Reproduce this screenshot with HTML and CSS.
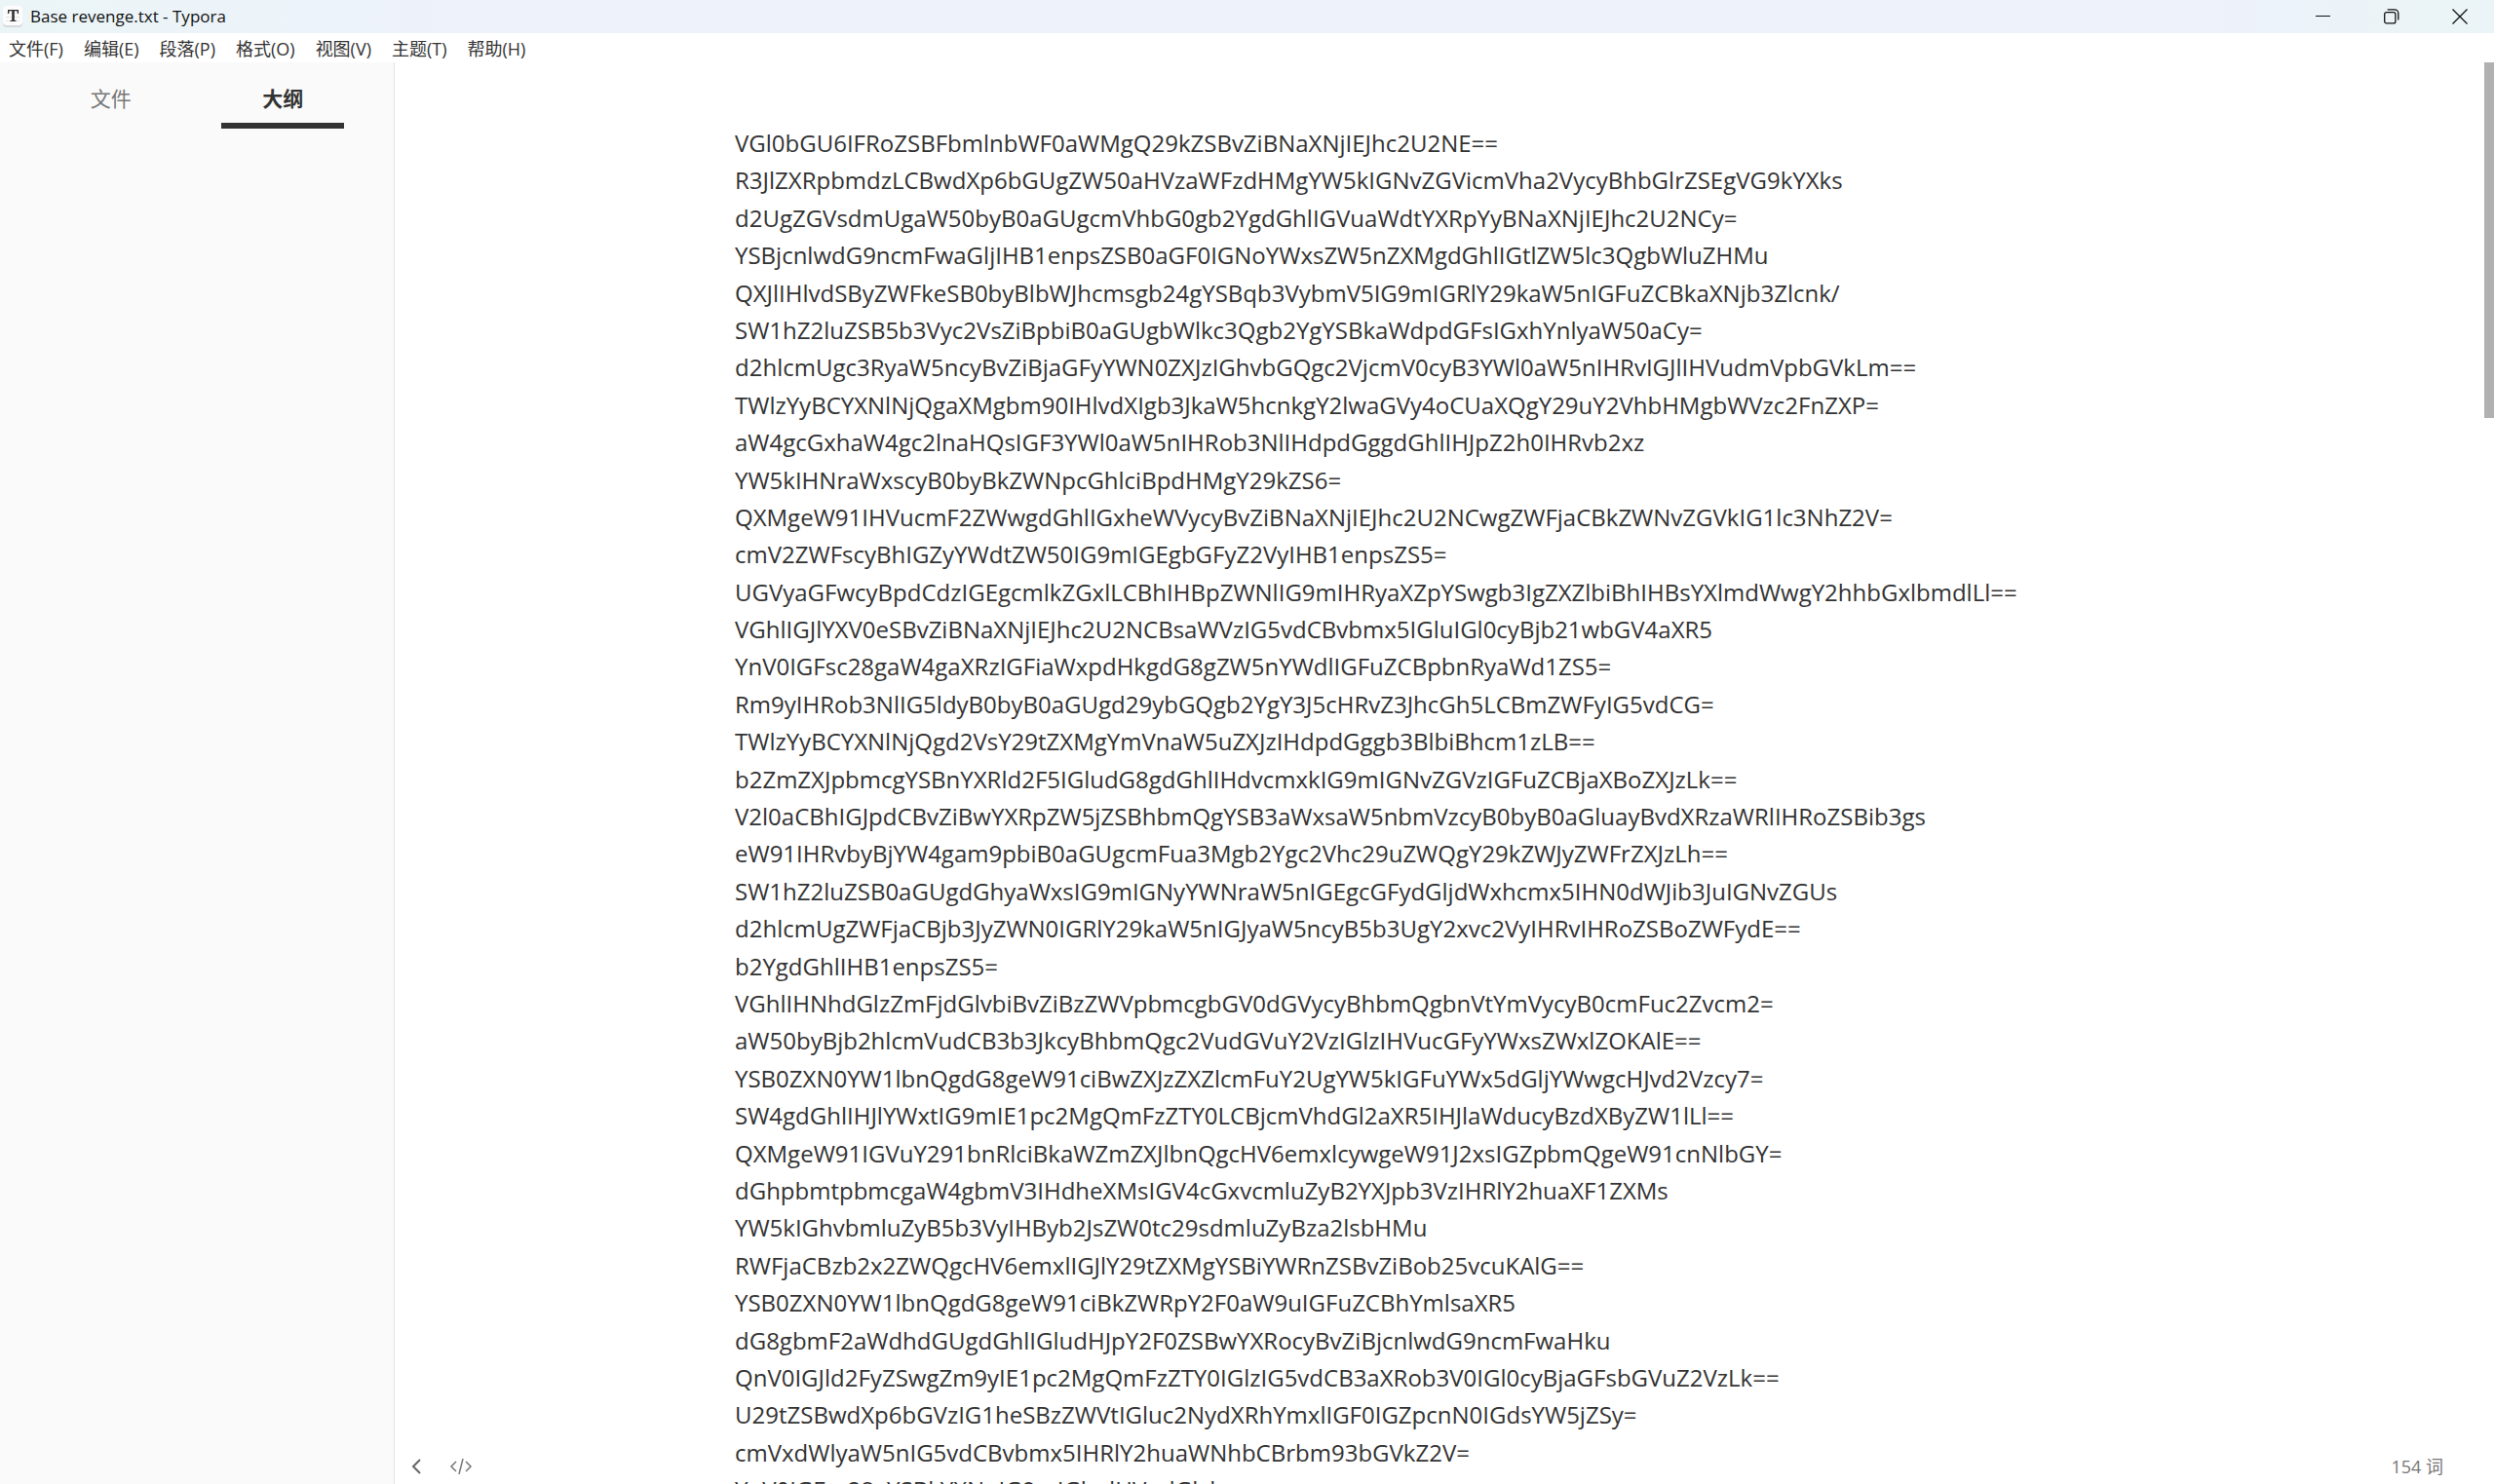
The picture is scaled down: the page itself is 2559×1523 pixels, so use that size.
FILE: index.html
```html
<!DOCTYPE html>
<html lang="zh-CN">
<head>
<meta charset="utf-8">
<title>Base revenge.txt - Typora</title>
<link rel="stylesheet" href="styles.css">
</head>
<body>
<header class="titlebar">
  <svg class="app-icon" width="22" height="24" viewBox="0 0 22 24" aria-hidden="true">
    <rect x="1" y="3" width="20" height="20" rx="4" fill="#d5dadd"/>
    <rect x="1" y="1" width="20" height="20" rx="4" fill="#fcfcfc"/>
    <path d="M4 8.500h14M4 12.500h14M4 16.500h14" stroke="#e8e8e8"/>
    <path d="M6 5h11v4h-1l-.6-2.700h-2.600v9.400l1.700.4v.9h-6v-.9l1.700-.4V6.300H7.600L7 9H6z" fill="#333"/>
  </svg>
  <h1 class="window-title">Base revenge.txt - Typora</h1>
  <div class="window-controls">
    <button type="button" class="window-button" aria-label="最小化">
      <svg width="16" height="16" viewBox="0 0 16 16"><path d="M0 7.500h15" stroke="#111"/></svg>
    </button>
    <button type="button" class="window-button" aria-label="还原">
      <svg width="16" height="16" viewBox="0 0 16 16" fill="none" stroke="#111" stroke-width="1.300"><rect x=".7" y="3.700" width="11.200" height="11.200" rx="2"/><path d="M3.700.8h7.300a3.800 3.800 0 0 1 3.800 3.800v7"/></svg>
    </button>
    <button type="button" class="window-button" aria-label="关闭">
      <svg width="16" height="16" viewBox="0 0 16 16"><path d="M.5.500l15 15M15.500.500l-15 15" stroke="#111" stroke-width="1.300"/></svg>
    </button>
  </div>
</header>
<nav class="menubar" aria-label="菜单">
  <button type="button" class="menu-item">文件(F)</button>
  <button type="button" class="menu-item">编辑(E)</button>
  <button type="button" class="menu-item">段落(P)</button>
  <button type="button" class="menu-item">格式(O)</button>
  <button type="button" class="menu-item">视图(V)</button>
  <button type="button" class="menu-item">主题(T)</button>
  <button type="button" class="menu-item">帮助(H)</button>
</nav>
<div class="workspace">
  <aside class="sidebar">
    <div class="tabs">
      <button type="button" class="tab">文件</button>
      <button type="button" class="tab tab-active">大纲</button>
    </div>
  </aside>
  <main class="editor">
    <article class="document">
      <p class="paragraph">VGl0bGU6IFRoZSBFbmlnbWF0aWMgQ29kZSBvZiBNaXNjIEJhc2U2NE==<br>
R3JlZXRpbmdzLCBwdXp6bGUgZW50aHVzaWFzdHMgYW5kIGNvZGVicmVha2VycyBhbGlrZSEgVG9kYXks<br>
d2UgZGVsdmUgaW50byB0aGUgcmVhbG0gb2YgdGhlIGVuaWdtYXRpYyBNaXNjIEJhc2U2NCy=<br>
YSBjcnlwdG9ncmFwaGljIHB1enpsZSB0aGF0IGNoYWxsZW5nZXMgdGhlIGtlZW5lc3QgbWluZHMu<br>
QXJlIHlvdSByZWFkeSB0byBlbWJhcmsgb24gYSBqb3VybmV5IG9mIGRlY29kaW5nIGFuZCBkaXNjb3Zlcnk/<br>
SW1hZ2luZSB5b3Vyc2VsZiBpbiB0aGUgbWlkc3Qgb2YgYSBkaWdpdGFsIGxhYnlyaW50aCy=<br>
d2hlcmUgc3RyaW5ncyBvZiBjaGFyYWN0ZXJzIGhvbGQgc2VjcmV0cyB3YWl0aW5nIHRvIGJlIHVudmVpbGVkLm==<br>
TWlzYyBCYXNlNjQgaXMgbm90IHlvdXIgb3JkaW5hcnkgY2lwaGVy4oCUaXQgY29uY2VhbHMgbWVzc2FnZXP=<br>
aW4gcGxhaW4gc2lnaHQsIGF3YWl0aW5nIHRob3NlIHdpdGggdGhlIHJpZ2h0IHRvb2xz<br>
YW5kIHNraWxscyB0byBkZWNpcGhlciBpdHMgY29kZS6=<br>
QXMgeW91IHVucmF2ZWwgdGhlIGxheWVycyBvZiBNaXNjIEJhc2U2NCwgZWFjaCBkZWNvZGVkIG1lc3NhZ2V=<br>
cmV2ZWFscyBhIGZyYWdtZW50IG9mIGEgbGFyZ2VyIHB1enpsZS5=<br>
UGVyaGFwcyBpdCdzIGEgcmlkZGxlLCBhIHBpZWNlIG9mIHRyaXZpYSwgb3IgZXZlbiBhIHBsYXlmdWwgY2hhbGxlbmdlLl==<br>
VGhlIGJlYXV0eSBvZiBNaXNjIEJhc2U2NCBsaWVzIG5vdCBvbmx5IGluIGl0cyBjb21wbGV4aXR5<br>
YnV0IGFsc28gaW4gaXRzIGFiaWxpdHkgdG8gZW5nYWdlIGFuZCBpbnRyaWd1ZS5=<br>
Rm9yIHRob3NlIG5ldyB0byB0aGUgd29ybGQgb2YgY3J5cHRvZ3JhcGh5LCBmZWFyIG5vdCG=<br>
TWlzYyBCYXNlNjQgd2VsY29tZXMgYmVnaW5uZXJzIHdpdGggb3BlbiBhcm1zLB==<br>
b2ZmZXJpbmcgYSBnYXRld2F5IGludG8gdGhlIHdvcmxkIG9mIGNvZGVzIGFuZCBjaXBoZXJzLk==<br>
V2l0aCBhIGJpdCBvZiBwYXRpZW5jZSBhbmQgYSB3aWxsaW5nbmVzcyB0byB0aGluayBvdXRzaWRlIHRoZSBib3gs<br>
eW91IHRvbyBjYW4gam9pbiB0aGUgcmFua3Mgb2Ygc2Vhc29uZWQgY29kZWJyZWFrZXJzLh==<br>
SW1hZ2luZSB0aGUgdGhyaWxsIG9mIGNyYWNraW5nIGEgcGFydGljdWxhcmx5IHN0dWJib3JuIGNvZGUs<br>
d2hlcmUgZWFjaCBjb3JyZWN0IGRlY29kaW5nIGJyaW5ncyB5b3UgY2xvc2VyIHRvIHRoZSBoZWFydE==<br>
b2YgdGhlIHB1enpsZS5=<br>
VGhlIHNhdGlzZmFjdGlvbiBvZiBzZWVpbmcgbGV0dGVycyBhbmQgbnVtYmVycyB0cmFuc2Zvcm2=<br>
aW50byBjb2hlcmVudCB3b3JkcyBhbmQgc2VudGVuY2VzIGlzIHVucGFyYWxsZWxlZOKAlE==<br>
YSB0ZXN0YW1lbnQgdG8geW91ciBwZXJzZXZlcmFuY2UgYW5kIGFuYWx5dGljYWwgcHJvd2Vzcy7=<br>
SW4gdGhlIHJlYWxtIG9mIE1pc2MgQmFzZTY0LCBjcmVhdGl2aXR5IHJlaWducyBzdXByZW1lLl==<br>
QXMgeW91IGVuY291bnRlciBkaWZmZXJlbnQgcHV6emxlcywgeW91J2xsIGZpbmQgeW91cnNlbGY=<br>
dGhpbmtpbmcgaW4gbmV3IHdheXMsIGV4cGxvcmluZyB2YXJpb3VzIHRlY2huaXF1ZXMs<br>
YW5kIGhvbmluZyB5b3VyIHByb2JsZW0tc29sdmluZyBza2lsbHMu<br>
RWFjaCBzb2x2ZWQgcHV6emxlIGJlY29tZXMgYSBiYWRnZSBvZiBob25vcuKAlG==<br>
YSB0ZXN0YW1lbnQgdG8geW91ciBkZWRpY2F0aW9uIGFuZCBhYmlsaXR5<br>
dG8gbmF2aWdhdGUgdGhlIGludHJpY2F0ZSBwYXRocyBvZiBjcnlwdG9ncmFwaHku<br>
QnV0IGJld2FyZSwgZm9yIE1pc2MgQmFzZTY0IGlzIG5vdCB3aXRob3V0IGl0cyBjaGFsbGVuZ2VzLk==<br>
U29tZSBwdXp6bGVzIG1heSBzZWVtIGluc2NydXRhYmxlIGF0IGZpcnN0IGdsYW5jZSy=<br>
cmVxdWlyaW5nIG5vdCBvbmx5IHRlY2huaWNhbCBrbm93bGVkZ2V=<br>
YnV0IGFsc28gYSBkYXNoIG9mIGludHVpdGlvbg==</p>
    </article>
    <footer class="statusbar">
      <button type="button" class="status-button" aria-label="隐藏侧边栏">
        <svg width="11" height="16" viewBox="0 0 11 16" fill="none" stroke="#666" stroke-width="2"><path d="M9 1L2 8l7 7"/></svg>
      </button>
      <button type="button" class="status-button" aria-label="源代码模式">
        <svg width="24" height="16" viewBox="0 0 24 16" fill="none" stroke="#777" stroke-width="1.500"><path d="M7 3L2 8l5 5M17 3l5 5-5 5M14 0l-4 16"/></svg>
      </button>
      <button type="button" class="word-count">154 词</button>
    </footer>
  </main>
  <div class="scrollbar"><div class="scrollbar-thumb"></div></div>
</div>
</body>
</html>
```
FILE: styles.css
```css
* {
  box-sizing: border-box;
}

body {
  margin: 0;
  height: 100vh;
  display: flex;
  flex-direction: column;
  overflow: hidden;
  background: #fff;
  color: #333;
  font-family: "Open Sans", "Noto Sans CJK SC", sans-serif;
  font-size: 24px;
}

button {
  margin: 0;
  padding: 0;
  border: 0;
  background: none;
  color: inherit;
  font: inherit;
}

svg {
  display: block;
}

.titlebar {
  flex: none;
  display: flex;
  align-items: center;
  height: 34px;
  padding-left: 2px;
  background: linear-gradient(90deg, #ebf5f7, #eef2fb 20%, #eef2fb 88%, #ebf4f7 97%);
}

.app-icon {
  margin-right: 7px;
}

.window-title {
  margin: 0;
  color: #111;
  font-size: 17px;
  font-weight: 400;
  line-height: 24px;
}

.window-controls {
  display: flex;
  margin-left: auto;
}

.window-button {
  display: flex;
  align-items: center;
  justify-content: center;
  width: 70px;
  height: 34px;
}

.menubar {
  flex: none;
  display: flex;
  align-items: center;
  gap: 21px;
  height: 30px;
  padding: 2px 9px 0;
  color: #333;
  font-size: 18px;
  line-height: 28px;
}

.workspace {
  flex: 1;
  display: flex;
  min-height: 0;
}

.sidebar {
  flex: none;
  width: 405px;
  background: #fafafa;
  border-right: 1px solid #e4e4e4;
}

.tabs {
  display: flex;
  justify-content: space-evenly;
  padding-top: 14px;
}

.tab {
  width: 126px;
  height: 54px;
  padding-bottom: 2px;
  border-bottom: 6px solid transparent;
  color: #777;
  font-size: 21px;
  line-height: 46px;
}

.tab-active {
  border-bottom-color: #333;
  color: #333;
  font-weight: 700;
}

.editor {
  position: relative;
  flex: 1;
  min-width: 0;
  overflow: hidden;
}

.document {
  max-width: 1536px;
  margin: 0 auto;
  padding: 64px 45px;
}

.paragraph {
  margin: 0;
  line-height: 1.6;
  white-space: nowrap;
}

.statusbar {
  position: absolute;
  right: 0;
  bottom: 0;
  left: 0;
  display: flex;
  align-items: center;
  height: 36px;
  padding: 0 42px 0 17px;
}

.status-button {
  margin-right: 28px;
}

.word-count {
  margin-left: auto;
  color: #777;
  font-size: 18px;
  line-height: 36px;
}

.scrollbar {
  flex: none;
  width: 10px;
}

.scrollbar-thumb {
  height: 25%;
  background: #b1b1b1;
}
```
